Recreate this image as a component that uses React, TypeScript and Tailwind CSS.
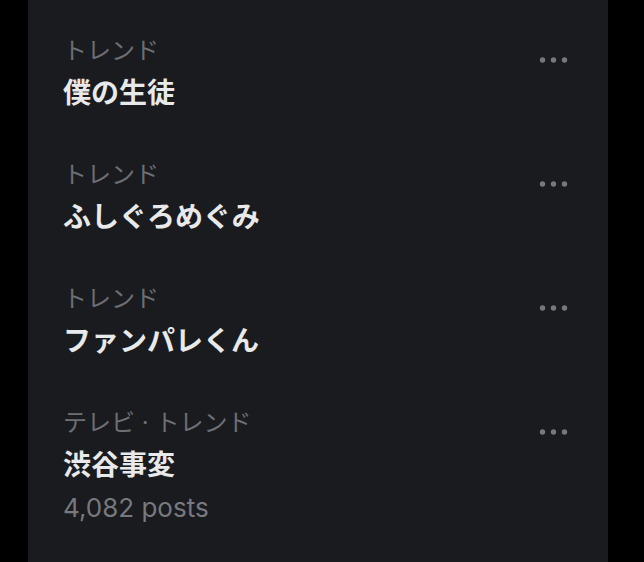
import React from "react";

type Trend = { label: string; title: string; posts?: string };

const trends: Trend[] = [
  { label: "トレンド", title: "僕の生徒" },
  { label: "トレンド", title: "ふしぐろめぐみ" },
  { label: "トレンド", title: "ファンパレくん" },
  { label: "テレビ · トレンド", title: "渋谷事変", posts: "4,082 posts" },
];

const jp = { fontFamily: '"Inter", "Noto Sans CJK JP", sans-serif' };

const MoreDots = () => (
  <svg width="30" height="8" viewBox="0 0 30 8" className="shrink-0">
    <circle cx="3.5" cy="4" r="2.7" fill="#75787d" />
    <circle cx="14.5" cy="4" r="2.7" fill="#75787d" />
    <circle cx="25.5" cy="4" r="2.7" fill="#75787d" />
  </svg>
);

export default function App() {
  return (
    <div className="w-[644px] h-[562px] bg-black flex overflow-hidden" style={jp}>
      <div className="ml-[28px] w-[580px] h-full bg-[#1a1b1f] pt-[14px]">
        {trends.map((t, i) => (
          <div key={i} className="h-[124px] pt-[22px] pl-[35px] pr-[39px] flex justify-between items-start">
            <div className="flex flex-col">
              <span className="text-[24px] leading-[30px] text-[#6c6f74]">{t.label}</span>
              <span className="mt-[9px] text-[28px] leading-[36px] font-bold text-[#e7e9ea]">{t.title}</span>
              {t.posts && (
                <span className="mt-[7px] text-[26px] leading-[36px] text-[#76797e]">{t.posts}</span>
              )}
            </div>
            <div className="mt-[20px]">
              <MoreDots />
            </div>
          </div>
        ))}
      </div>
    </div>
  );
}
